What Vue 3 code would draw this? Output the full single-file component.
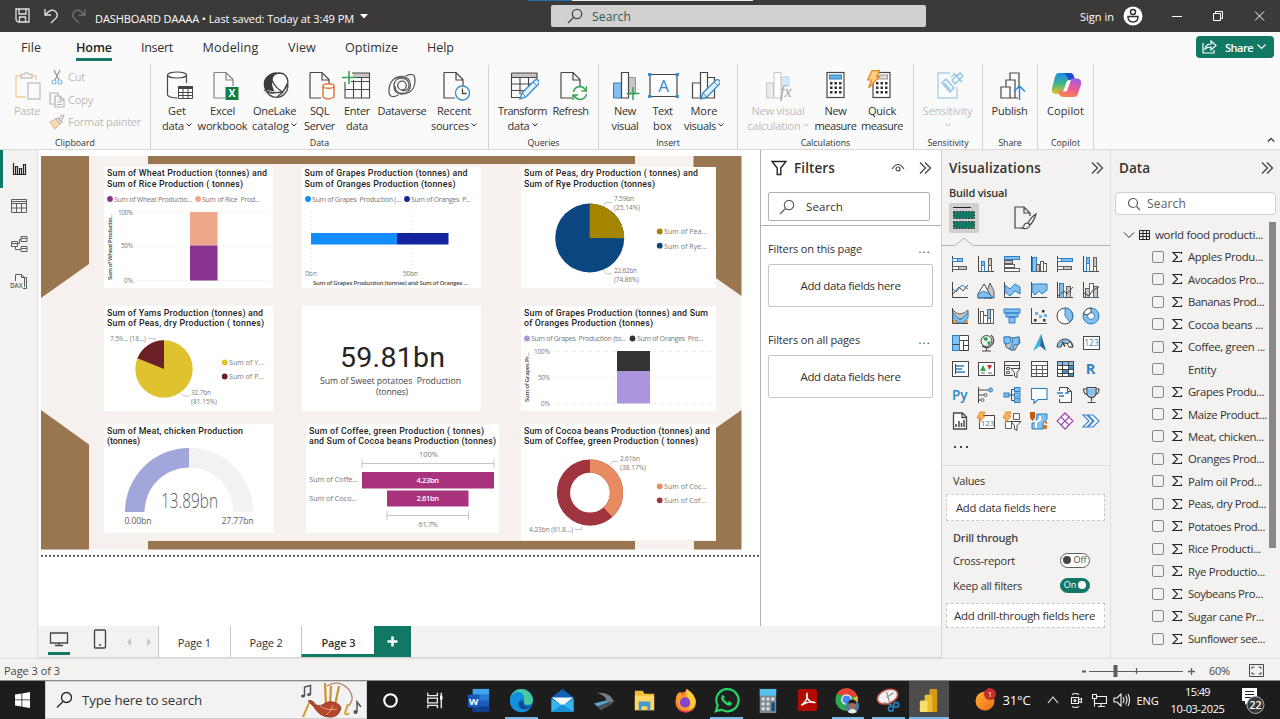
<script setup>
const vFit = {
  mounted(el, { value }) {
    const range = document.createRange()
    range.selectNodeContents(el)
    const width = range.getBoundingClientRect().width
    const count = el.textContent.length
    if (count) el.style.letterSpacing = (value - width) / count + 'px'
  },
}

const menus = [
  { t: 'File', w: 20, c: 62 }, { t: 'Home', w: 36, c: 64, on: true }, { t: 'Insert', w: 32, c: 62 },
  { t: 'Modeling', w: 56, c: 85 }, { t: 'View', w: 28, c: 58 }, { t: 'Optimize', w: 53, c: 81 }, { t: 'Help', w: 27, c: 57 },
]

const dk = '#484644'
const page = (x = 6) => `<path d="M${x} 2.5h12l7 7V16M${x} 2.5V28h11M${x + 12} 2.5V10h7" fill="none" stroke="${dk}" stroke-width="1.2"/>`
const pencil = '<path d="M13 29l2-6L28 10q2-1 3.500 .5t0 3.500L19 27z" fill="#e5f2fb" stroke="#3a8fd0" stroke-width="1.4"/><path d="M15 23l4 4M26 12l4 4" stroke="#3a8fd0"/>'
const calc = (x) => `<rect x="${x}" y="2.500" width="17" height="25" fill="#fff" stroke="${dk}" stroke-width="1.200"/>` +
  [0, 1, 2].map(r => [0, 1, 2].map(c => `<rect x="${x + 3 + c * 4.5}" y="${12 + r * 4.5}" width="2.500" height="2.500" fill="#333"/>`).join('')).join('')

const groups = [
  { name: 'Data', w: 338, p: 6, items: [
    { w: 40, a: 'Get', b: 'data', aw: 18, bw: 22, d: 1, i: `<ellipse cx="16" cy="5" rx="9.500" ry="3" fill="#fff" stroke="${dk}" stroke-width="1.200"/><path d="M6.500 5v20q2 3 10 3M25.500 5v8" fill="none" stroke="${dk}" stroke-width="1.200"/><path d="M17.500 16.500h14v12h-14z" fill="#fff" stroke="${dk}"/><path d="M17 16h15v3H17z" fill="${dk}"/><path d="M17 22.500h14M17 25.500h14M22 19v10M27 19v10" stroke="${dk}"/>` },
    { w: 51, a: 'Excel', b: 'workbook', aw: 25, bw: 50, i: `<path d="M7 2.500h12l7 7V16M7 2.500V28h11M19 2.500V10h7" fill="none" stroke="#858381" stroke-width="1.200"/><rect x="18.500" y="17" width="13" height="13" fill="#107c41"/><text x="25" y="27.200" text-anchor="middle" font-family="Open Sans, sans-serif" font-weight="700" font-size="10.500" fill="#fff">X</text>` },
    { w: 53, a: 'OneLake', b: 'catalog', aw: 43, bw: 37, d: 1, i: `<circle cx="17.500" cy="16" r="11.300" fill="#fff" stroke="${dk}" stroke-width="1.300"/><path d="M5 17Q3 9 11 4q7-4 12 1-9 1-10 9 1 6 4 9-9 3-12-6z" fill="#3b3a39"/><path d="M13 10q0-6 7-7 8 0 9 9l-5 10q-8-4-11-12zM5 20q8 4 18 2M18 27l6-5 5-8" fill="#fff" stroke="${dk}" stroke-width="1.300"/>` },
    { w: 37, a: 'SQL', b: 'Server', aw: 19, bw: 31, i: page() + '<path d="M19 16v11q5 4 11 0V16" fill="#fff" stroke="#e07b39" stroke-width="1.500"/><ellipse cx="24.500" cy="16" rx="5.500" ry="2.300" fill="#fff" stroke="#e07b39" stroke-width="1.500"/>' },
    { w: 38, a: 'Enter', b: 'data', aw: 26, bw: 22, i: `<path d="M4 28h25V3H12v8H4z" fill="#fff"/><path d="M12 3h17v4H12z" fill="#c8c6c4"/><path d="M11 3h17.500v25H4V12M4 19.500h24.500M10 11.500h18.500M12.500 10v18M20.500 7v21M12 7.500h16" fill="none" stroke="${dk}" stroke-width="1.100"/><path d="M8 1v13M1 7.500h14" stroke="#35a353" stroke-width="1.600"/>` },
    { w: 52, a: 'Dataverse', aw: 49, i: '<g fill="none" stroke="#595755" stroke-width="1.300"><path d="M19.500 6Q29 1.500 29 10c0 9-5 14-13 14-5 0-8-3-8-8s3-8 7.500-8S23 11 23 15.500 19 21 16 20.500"/><path d="M12.500 25Q3 29.500 3 21C3 12 8 6.500 16 6.500c5 0 8.500 3.500 8.500 8.500s-3.500 8.500-8 8.500-7.500-3-7.500-7.500"/><circle cx="16" cy="15.500" r="4.300"/></g>' },
    { w: 52, a: 'Recent', b: 'sources', aw: 34, bw: 38, d: 1, i: page() + '<circle cx="24.500" cy="23" r="7" fill="#fff" stroke="#3a8fd0" stroke-width="1.400"/><path d="M24.500 18.500V23.500h4" fill="none" stroke="#484644" stroke-width="1.300"/>' },
  ] },
  { name: 'Queries', w: 110, p: 8, items: [
    { w: 51, a: 'Transform', b: 'data', aw: 49, bw: 22, d: 1, i: `<path d="M5 3h25v4H5z" fill="#c8c6c4"/><path d="M4.500 3h25.500v12M4.500 3v24.500h9M5 7.500h25M5 14h23M5 20.500h13M13 7v17M21.500 7v12" fill="none" stroke="${dk}" stroke-width="1.100"/>` + pencil },
    { w: 45, a: 'Refresh', aw: 36, i: page() + '<g fill="none" stroke="#35a353" stroke-width="1.500"><path d="M18.500 22q1-5 6-5.500 4 0 6.500 4M31.500 24q-1 5-6 5.500-4 0-6.500-4"/><path d="M31.500 16v5h-5M18 30v-5h5"/></g>' },
  ] },
  { name: 'Insert', w: 139, p: 6, items: [
    { w: 40, a: 'New', b: 'visual', aw: 22, bw: 27, i: `<path d="M4.500 13h8v15h-8z" fill="#83c0f0" stroke="#2b7fc4"/><path d="M19.500 7.500h7V24h-7z" fill="#c8c6c4" stroke="#979593"/><path d="M12.500 2.500h7V28h-7z" fill="#fff" stroke="${dk}" stroke-width="1.200"/><path d="M24 17v13M17.500 23.500h13" stroke="#35a353" stroke-width="1.500"/>` },
    { w: 35, a: 'Text', b: 'box', aw: 20, bw: 19, i: `<path d="M3 4.500h27v22H3z" fill="#fff" stroke="${dk}" stroke-width="1.200"/><g fill="#3a8fd0"><path d="M1 3h3.500v3H1zM28.500 3H32v3h-3.500zM1 25h3.500v3H1zM28.500 25H32v3h-3.500z"/></g><text x="16.500" y="21.700" text-anchor="middle" font-family="Open Sans, sans-serif" font-size="17" fill="#2f8ad0">A</text>` },
    { w: 48, a: 'More', b: 'visuals', aw: 27, bw: 32, d: 1, i: `<path d="M4.500 13h8v15h-8zM12.500 2.500h7V28h-7zM19.500 7.500h7V28h-7z" fill="#fff" stroke="${dk}" stroke-width="1.200"/>` + pencil },
  ] },
  { name: 'Calculations', w: 176, p: 8, items: [
    { w: 64, a: 'New visual', b: 'calculation', aw: 53, bw: 53, d: 1, off: 1, i: `<path d="M4.500 13h7v15h-7z" fill="#edebe9" stroke="#c8c6c4"/><path d="M19 7h8v9h-8z" fill="#d5e8f6" stroke="#b5d6ee"/><path d="M12 2.500h7V28h-7z" fill="#fff" stroke="#c8c6c4"/><text x="18" y="27" font-family="Liberation Serif, serif" font-style="italic" font-size="16" fill="#a5a3a1">fx</text>` },
    { w: 51, a: 'New', b: 'measure', aw: 22, bw: 42, i: calc(7) + '<rect x="9.500" y="5" width="12" height="4" fill="#6ab1e8" stroke="#2b7fc4"/>' },
    { w: 42, a: 'Quick', b: 'measure', aw: 28, bw: 42, i: calc(7) + '<rect x="9.500" y="5" width="12" height="4" fill="#e1dfdd" stroke="#979593"/><path d="M6 .7h7.500l-3 6h3L2.500 18l3-8h-4z" fill="#fbd089" stroke="#e8871a" stroke-width="1.200"/>' },
  ] },
  { name: 'Sensitivity', w: 69, p: 8, items: [
    { w: 51, a: 'Sensitivity', b: '', aw: 50, d: 1, off: 1, i: '<path d="M18 3H6v25h19V17" fill="none" stroke="#a9d0ea" stroke-width="1.300"/><path d="M10 13l4-4 8 9-4 4zM12.500 13l6 7M19 7l4-3 2 2 3-3M20 10l8-7 3 3-8 8zM22 3l8 9" fill="none" stroke="#8fc2e5" stroke-width="1.300"/>' },
  ] },
  { name: 'Share', w: 55, p: 5, items: [
    { w: 43, a: 'Publish', aw: 36, i: `<path d="M7 17h9v11H7zM12 17v-7h9v18h-5M16 10V3h9v13M21 28h3" fill="none" stroke="${dk}" stroke-width="1.200"/><path d="M25.500 30V16M20 21.500l5.500-5.500 5.500 5.500" fill="none" stroke="#2b88d8" stroke-width="1.500"/>` },
  ] },
  { name: 'Copilot', w: 56, p: 5, items: [
    { w: 45, a: 'Copilot', aw: 37, i: '<defs><linearGradient id="cpA" x1="0" y1="0" x2="0" y2="1"><stop offset="0" stop-color="#1a8bea"/><stop offset=".5" stop-color="#3bb58a"/><stop offset="1" stop-color="#e8c51e"/></linearGradient><linearGradient id="cpB" x1=".6" y1="0" x2=".3" y2="1"><stop offset="0" stop-color="#a35be8"/><stop offset=".5" stop-color="#ee5a97"/><stop offset="1" stop-color="#f58a4c"/></linearGradient></defs><path d="M9 3h11q3 0 4 4l1 3h-5q-3 0-4 4l-2 7q-1 3-4 3H6q-5 0-4-6L5 7q1-4 4-4z" fill="url(#cpA)"/><path d="M14 3h6q3 0 4 4l1 3h-5q-2 0-3-3t-3-4z" fill="#1b4fd0"/><path d="M24 27H13q-3 0-4-3l-1-3 5-.5q3 0 4-4l2-5q1-3 4-3h4q5 0 4 6l-3 9q-1 3.500-4 3.500z" fill="url(#cpB)"/><path d="M17 11l4-1-4 11-4 1z" fill="#fff"/>' },
  ] },
]

const b = '#2b7fc4', f = '#83c0f0', g = '#605e5c', lg = '#c8c6c4'
const ax = `<path d="M1.500 1v15.500H17" fill="none" stroke="${dk}"/>`
const ay = `<path d="M1.500 1v16" stroke="${dk}"/>`
const frame = `<rect x="1.500" y="2.500" width="16" height="13" fill="#fff" stroke="${dk}"/>`
const bolt = '<path d="M3 0h5L6 4h2L2 11l1-5H0z" fill="#fbb65a" stroke="#e07b1a" stroke-width=".8"/>'
const bar = (x, y, w, h, c, s) => `<rect x="${x}" y="${y}" width="${w}" height="${h}" fill="${c}" stroke="${s}"/>`
const vizIcons = [
  ay + bar(1.5, 3.5, 5, 3, '#fff', b) + bar(6.5, 3.5, 5, 3, f, b) + bar(1.5, 11.5, 6, 3, '#fff', g) + bar(7.5, 11.5, 8, 3, lg, g),
  ax + bar(4.5, 6.5, 3, 4, f, b) + bar(4.5, 10.500, 3, 6, '#fff', b) + bar(11.5, 3.5, 3, 7, lg, g) + bar(11.5, 10.5, 3, 6, '#fff', g),
  ay + bar(1.5, 1.500, 15, 3, f, b) + bar(1.5, 5.5, 8, 3, lg, g) + bar(1.5, 9.5, 10, 3, '#fff', g) + bar(1.5, 13.5, 15, 3, '#fff', g),
  ax + bar(2.5, 2.5, 4, 14, f, b) + bar(6.5, 9.5, 3, 7, lg, g) + bar(10.5, 6.5, 3, 10, '#fff', g) + bar(13.5, 8.5, 3, 8, '#fff', g),
  ay + bar(1.5, 3.5, 4, 3, '#fff', b) + bar(5.5, 3.5, 11, 3, f, b) + bar(1.5, 11.5, 6, 3, '#fff', g) + bar(7.5, 11.5, 8, 3, lg, g),
  ax + bar(4.5, 2.5, 3, 6, f, b) + bar(4.5, 8.5, 3, 8, '#fff', b) + bar(11.5, 2.5, 3, 9, lg, g) + bar(11.5, 11.5, 3, 5, '#fff', g),
  ax + `<path d="M2 13L8 6l4 4 5-6" fill="none" stroke="${dk}"/><path d="M2 8l3 3 6-7 6 4" fill="none" stroke="${b}"/>`,
  `<path d="M7 17L13 2l4 8v7z" fill="${lg}" stroke="${g}"/><path d="M1 13L7 3l8 14H1z" fill="#fff" stroke="${dk}"/><path d="M1 16.500v-3l5-3.500 5 2 5 4.500z" fill="${f}" stroke="${b}"/>`,
  ax + `<path d="M2 4l5 4 5-5 5 3v7l-5-3-5 5-5-4z" fill="${f}" stroke="${b}"/>`,
  ax + `<path d="M2 3h15v6l-5 4-3-3-4 4-3-4z" fill="${f}" stroke="${b}"/>`,
  ax + bar(3.5, 2.5, 4, 14, f, b) + bar(10.5, 5.5, 4, 11, lg, g) + `<path d="M2 15l6-5 3 3 6-7" fill="none" stroke="${dk}"/>`,
  ax + bar(3.5, 7.5, 4, 9, lg, g) + bar(7.500, 2.500, 4, 14, '#fff', b) + bar(11.5, 5.5, 4, 11, lg, g) + `<path d="M2 12l5 3 4-6 6-3" fill="none" stroke="${dk}"/>`,
  ax + `<path d="M2 13h4l3 3H2zM12 13h5v3h-5z" fill="#ec9b43"/><path d="M2 3q3 4 7 4t8-4v4q-4 5-8 5T2 7z" fill="${lg}" stroke="${g}"/><path d="M2 6l7 7 8-7v5l-5 5H8l-6-5z" fill="${f}" stroke="${b}"/>`,
  ax + bar(3.5, 4.5, 3, 12, '#fff', g) + bar(6.5, 8.5, 4, 8, '#fff', g) + bar(10.5, 2.5, 3, 9, f, b) + bar(13.5, 2.5, 3, 14, '#fff', g),
  `<path d="M1 2h16v4H1zM3 6h12v4H3zM6 10h6v6H6z" fill="${f}" stroke="${b}"/>`,
  ax + `<path d="M5 5h3v3H5zM9 8h3v3H9zM14 7h3v3h-3z" fill="#6db4ea"/><path d="M12 3h2.500v2.500H12zM4 12h2.500v2.500H4zM13 12h2.500v2.500H13z" fill="#333"/>`,
  `<circle cx="9" cy="9" r="8" fill="#fff" stroke="${dk}"/><path d="M9 1a8 8 0 0 1 5 14L9 9z" fill="${f}" stroke="${b}"/>`,
  `<circle cx="9" cy="9" r="5.700" fill="none" stroke="${f}" stroke-width="4.600"/><circle cx="9" cy="9" r="8" fill="none" stroke="${b}"/><circle cx="9" cy="9" r="3.500" fill="#fff" stroke="${b}"/><path d="M9 1a8 8 0 0 0-7.500 6l4 .7L9 5.500z" fill="#fff" stroke="${dk}"/>`,
  `<path d="M1.500 1.500h16v15h-16z" fill="#fff" stroke="${dk}"/><path d="M1.500 1.500h7v15h-7z" fill="${f}" stroke="${b}"/><path d="M1.500 10.500h7M8.500 6.500H17M12.500 6.500v10M12 11.500h5" stroke="${dk}"/>`,
  `<circle cx="9.500" cy="7" r="5.500" fill="#e7f4ea" stroke="${dk}"/><path d="M6 4l4-1 1 3-3 1zM10 8l4-1-2 5z" fill="#2c9a55"/><path d="M14 1q5 5 1 10-4 5-10 1M9.500 14v3M5 17h9" fill="none" stroke="${dk}" stroke-width="1.100"/>`,
  `<path d="M1 3h6l2 1 7-1 1 6-3 3-2 4H8l-5-3z" fill="${lg}" stroke="${g}"/><path d="M1 3h6l1 5-3 2-4-1zM10 4l6-1v7l-5 1-1 5-4-1 3-4z" fill="${f}" stroke="${b}"/>`,
  '<path d="M11 0L3 17l7-5z" fill="#3db5d9"/><path d="M11 0l5 17-6-5z" fill="#1e6f9f"/>',
  `<path d="M1 13a8 8 0 0 1 16 0h-4a4 4 0 0 0-8 0z" fill="${f}" stroke="${dk}"/><path d="M14 7l3 6h-4a4 4 0 0 0-1.500-2.500z" fill="#fff" stroke="${dk}"/><path d="M9 12.500L6 7.500" stroke="${dk}" stroke-width="1.500"/>`,
  frame + `<text x="9.500" y="12.200" text-anchor="middle" font-size="8.500" font-family="Open Sans, sans-serif" fill="${b}">123</text>`,
  bar(1.5, 1.5, 16, 15, '#fff', dk) + `<path d="M4.500 4v10" stroke="${dk}"/><path d="M5 6h8M5 9h6M5 12h9" stroke="${b}" stroke-width="1.700"/>`,
  frame + '<path d="M3 11l3-6 3 6z" fill="#35a353"/><path d="M10 5h5l-2.500 5z" fill="#d13438"/><path d="M4 13h4M11 13h4" stroke="#605e5c"/>',
  `<path d="M10 15.500H1.500v-14h15V8M1 5.500h16" fill="none" stroke="${dk}"/><path d="M3.500 7.500h3v2h-3zM3.500 11.500h3v2h-3z" fill="none" stroke="${g}"/><path d="M8 8.500h9l-3 4v5l-2.500-1.500v-3.500z" fill="#fff" stroke="${dk}"/>`,
  bar(1.5, 1.5, 16, 15, '#fff', dk) + `<path d="M1 5.500h16M1 9.500h16M1 13.500h16M6.500 5v12M12.500 5v12" stroke="${g}"/>`,
  bar(1.5, 1.500, 16, 15, '#fff', dk) + `<path d="M6 9h6v4H6zM12 5h5v4h-5zM12 13h5v3h-5z" fill="#3a8fd0"/><path d="M2 2h15v3H2z" fill="${f}"/><path d="M1 5.500h16M1 9.500h16M1 13.500h16M6.500 2v15M12.500 2v15" stroke="${dk}"/>`,
  `<text x="8.500" y="14" text-anchor="middle" font-size="14.500" font-weight="700" font-family="Open Sans, sans-serif" fill="#2e86c4">R</text>`,
  `<text x="1" y="13.500" font-size="13.500" font-weight="600" font-family="Open Sans, sans-serif" fill="#2e86c4">Py</text>`,
  `<path d="M1.500 1v16M1.500 4h10M1.500 9h6M1.500 14h3" stroke="${dk}"/><circle cx="13.500" cy="4" r="2" fill="${f}" stroke="${b}"/><circle cx="8.500" cy="9" r="1.500" fill="#fff" stroke="${g}"/><circle cx="5.500" cy="14" r="1.500" fill="#fff" stroke="${g}"/>`,
  `<path d="M6 9h5M8.500 3.500v11M8.500 3.500H11M8.500 14.500H11" fill="none" stroke="${dk}"/>` + bar(1, 7, 5, 4, f, b) + bar(11.5, 1.500, 5.500, 4, f, b) + bar(11.5, 7, 5.500, 4, f, b) + bar(11.5, 12.5, 5.500, 4, f, b),
  `<path d="M1.500 2.500h15.500v11H8l-4 4v-4H1.500z" fill="#fff" stroke="${b}" stroke-width="1.100"/>`,
  `<path d="M3.500 5V1.500h8l4 4v11h-12V13M11.500 1.500v4h4" fill="#fff" stroke="${dk}"/><path d="M1 7h6M9 7h4M3 10h5" stroke="${b}" stroke-width="1.600"/>`,
  `<path d="M5 1.500h9v6q-1 4-4.500 4T5 7.500zM5 3H1.500q0 5 4 5.500M14 3h3q0 5-4 5.500M9.500 11.500v4M5.500 16.500h8" fill="none" stroke="${dk}" stroke-width="1.200"/><path d="M6 2.500h7V8l-3.500 3L6 8z" fill="${f}"/>`,
  `<path d="M2.500 1h9l4 4v12h-13zM11 1v4.500h4.500" fill="#fff" stroke="${dk}" stroke-width="1.300"/><path d="M5 12v3M8 9v6M10.500 11v4M13 8v7" stroke="${dk}" stroke-width="1.500"/>`,
  `<rect x="2.500" y="3.500" width="15" height="13" fill="#fff" stroke="${dk}"/><text x="10.500" y="13.500" text-anchor="middle" font-size="8" font-family="Open Sans, sans-serif" fill="${b}">123</text>` + bolt,
  `<path d="M10.500 1.500h6v6h-6zM2.500 9.500h6v7h-6z" fill="#fff" stroke="${g}"/><path d="M8 9.500h10l-4 4v5l-2.500-1.500v-3.500z" fill="#fff" stroke="${dk}"/>` + bolt,
  `<path d="M7 2h10v5l-4 4v6H2v-6h4z" fill="${f}" stroke="${b}"/><path d="M10 4v4l-4 2v6" stroke="#fff" stroke-width="2" fill="none"/><path d="M0 0h5v6l-2.500 3L0 6z" fill="#c55a11"/><circle cx="15" cy="15" r="2.200" fill="#d4731c"/><circle cx="16" cy="10.500" r="1.300" fill="#d4731c"/>`,
  '<g fill="#fff" stroke="#a04fae" stroke-width="1.200"><path d="M9 1l8 8-8 8-8-8z"/><path d="M5 5l8 8M13 5l-8 8M9 1L5 5l4 4 4-4zM9 17l4-4-4-4-4 4z"/></g>',
  '<g fill="#fff" stroke="#3a86d0" stroke-width="1.200"><path d="M1 3h4l6 6-6 6H1l6-6z"/><path d="M6 3h5l6 6-6 6H6l6-6z"/></g>',
]

const fields = [
  ['Apples Produ...', 75], ['Avocados Pro...', 76], ['Bananas Prod...', 76], ['Cocoa beans ...', 75], ['Coffee, green ...', 77], ['Entity', 28],
  ['Grapes Produ...', 76], ['Maize Product...', 79], ['Meat, chicken...', 76], ['Oranges Prod...', 76], ['Palm oil Prod...', 74], ['Peas, dry Prod...', 78],
  ['Potatoes Prod...', 77], ['Rice Producti...', 73], ['Rye Productio...', 77], ['Soybeans Pro...', 75], ['Sugar cane Pr...', 76], ['Sunflower see...', 77],
]

const cards = [
  [104, 167, 169, 121], [302, 167, 179, 121], [521, 167, 195, 121],
  [104, 306, 169.500, 105], [302, 306, 179, 105], [521, 306, 195, 105],
  [104, 424, 169.500, 109], [306, 424, 193, 109], [521, 424, 195, 116],
]
const titles = [
  [107, 176, 'Sum of Wheat Production (tonnes) and', 160], [107, 186.500, 'Sum of Rice Production ( tonnes)', 136],
  [304.500, 176, 'Sum of Grapes Production (tonnes) and', 163], [304.500, 186.500, 'Sum of Oranges Production (tonnes)', 151],
  [524, 176, 'Sum of Peas, dry Production ( tonnes) and', 174], [524, 186.500, 'Sum of Rye Production (tonnes)', 131],
  [107, 315.500, 'Sum of Yams Production (tonnes) and', 156], [107, 326, 'Sum of Peas, dry Production ( tonnes)', 157],
  [524, 315.500, 'Sum of Grapes Production (tonnes) and Sum', 184], [524, 326, 'of Oranges Production (tonnes)', 129],
  [107, 433.500, 'Sum of Meat, chicken Production', 136], [107, 443.500, '(tonnes)', 33],
  [309, 433.500, 'Sum of Coffee, green Production ( tonnes)', 175], [309, 443.500, 'and Sum of Cocoa beans Production (tonnes)', 187],
  [524, 433.500, 'Sum of Cocoa beans Production (tonnes) and', 186], [524, 443.500, 'Sum of Coffee, green Production ( tonnes)', 174],
]
const labels = [
  [114, 201.500, 'Sum of Wheat Productio...', 78], [202, 201.500, 'Sum of Rice  Prod...', 58],
  [118, 214.500, '100%', 15, 6.5], [121, 248, '50%', 12, 6.5], [124, 282.500, '0%', 9, 6.5],
  [312, 201.500, 'Sum of Grapes  Production (...', 89], [411, 201.500, 'Sum of Oranges  P...', 60],
  [305, 275.500, '0bn', 12, 6.5], [403, 275.500, '50bn', 15, 6.5],
  [614, 200.500, '7.59bn', 20, 6.5], [614, 209.800, '(25.14%)', 26, 6.5], [614, 272.500, '22.62bn', 23, 6.5], [614, 281.800, '(74.86%)', 25, 6.5],
  [664, 234, 'Sum of Pea...', 43], [664, 248.500, 'Sum of Rye...', 43],
  [110, 341, '7.59... (18...)', 36, 6.5], [191, 394.500, '32.7bn', 20, 6.5], [191, 403.800, '(81.15%)', 26, 6.5],
  [229, 365, 'Sum of Y...', 35], [229, 379, 'Sum of P...', 35],
  [531, 341, 'Sum of Grapes  Production (to...', 95], [637, 341, 'Sum of Oranges  Pro...', 66],
  [534, 353.800, '100%', 16, 6.5], [538, 379.500, '50%', 12, 6.5], [541, 405.500, '0%', 9, 6.5],
  [124.500, 524.300, '0.00bn', 27, 8.7, '#605e5c'], [221.500, 524.300, '27.77bn', 32, 8.7, '#605e5c'],
  [419, 456.800, '100%', 19, 7.500], [418.500, 527, '61.7%', 19.500, 7.500],
  [309, 482, 'Sum of Coffe...', 49, 7.500], [309, 501, 'Sum of Coco...', 48, 7.500],
  [620, 460.800, '2.61bn', 20, 6.5], [620, 470, '(38.17%)', 26, 6.5], [529, 532, '4.23bn (61.8...)', 44, 6.5],
  [664, 489, 'Sum of Coc...', 43], [664, 503, 'Sum of Cof...', 42],
]
const dots = [
  [110, 199, '#883390'], [198, 199, '#efa789'], [308, 199, '#118dff'], [407, 199, '#12239e'],
  [659.700, 231.500, '#a48500'], [659.700, 245.700, '#0c4680'], [224.700, 362.500, '#e0c12f'], [224.700, 376.500, '#6b2028'],
  [527, 338.500, '#ab95dc'], [632.500, 338.500, '#333'], [659.700, 486.300, '#e98b60'], [659.700, 500.300, '#a0343e'],
]

const tasks = [
  { w: 46, i: '<circle cx="14" cy="14" r="6.500" fill="none" stroke="#fff" stroke-width="2.200"/>' },
  { w: 43.5, i: '<g fill="none" stroke="#eee" stroke-width="1.400"><path d="M7 6v3h10V6M7 22v-3h10v3M7 11.500h10v5H7z"/><path d="M21 6v16"/></g><path d="M19.700 9h2.600v4h-2.600z" fill="#fff"/>' },
  { w: 44.5, i: '<path d="M8 2h17v24H8z" fill="#1b5cbe"/><path d="M8 2h17v6H8z" fill="#41a5ee"/><path d="M8 8h17v6H8z" fill="#2b7cd3"/><path d="M8 20h17v6H8z" fill="#103f91"/><path d="M3 8h12v13H3z" fill="#185abd"/><text x="9" y="18.500" text-anchor="middle" font-size="10" font-weight="700" font-family="Open Sans, sans-serif" fill="#fff">W</text>' },
  { w: 41, u: 1, i: '<circle cx="14" cy="14" r="12" fill="#0f78c8"/><path d="M2.500 11C5-1 22-1 25.500 11c2 9-8 9-9 5 1-5-2-7-5-7-5 0-8 3-9 6z" fill="#48c9a0"/><path d="M2.500 12C6 2 17 4 17 12c-4-1-7 2-6 7 1 5 8 6 12 3-5 7-19 5-21-6z" fill="#1290df"/><path d="M11 18c0-3 2-5 5-3-1 6 5 6 8 4-3 6-13 5-13-1z" fill="#0c4a92"/>' },
  { w: 41, i: '<path d="M2.500 11L14 2l11.500 9v15h-23z" fill="#0e62b5"/><path d="M3 11h22l-11 9z" fill="#f4fbff"/><path d="M2.500 12l11.500 8 11.500-8v14h-23z" fill="#35b7ee"/><path d="M2.500 26L14 18l11.500 8z" fill="#198fd6"/>' },
  { w: 41, i: '<path d="M7 6q12-1 16 6l2 3-9 3q4-8-9-12z" fill="#777c80"/><path d="M4 17l13-3 7 3-13 7z" fill="#4a5257"/><path d="M4 17l13-3 3 1-12 5z" fill="#57a8cd"/>' },
  { w: 41, i: '<path d="M4 4h8l2 3h10v17H4z" fill="#f4bd36"/><path d="M4 9h20v15H4z" fill="#ffd667"/><path d="M8 15h12v9h-3v-4h-6v4H8z" fill="#3f9ad6"/>' },
  { w: 41, i: '<circle cx="14" cy="15.500" r="10.500" fill="#ff6a2f"/><path d="M4 14q0-8 5-9 0 4 3 4l3-7q4 2 4 5 6 3 6 9-1 10-11 10T4 14z" fill="#ff9a2e"/><path d="M15 2q9 5 9 13 0 8-8 10 6-6 2-12-4-4-3-11z" fill="#ffcf3c"/><circle cx="13.500" cy="16" r="5.300" fill="#8147c8"/><path d="M4 13q1 11 10 12 6 0 9-5-4 9-12 6-7-3-7-13z" fill="#ed3653"/>' },
  { w: 41, u: 1, i: '<path d="M3 25l1.800-6A11.500 11.500 0 1 1 9 23.500z" fill="#1f2220" stroke="#27d366" stroke-width="2.300"/><path d="M10 8q-4 4 2 9t8 0l-3-2.500-2 1.500q-3-1-4-4l1.500-1.500z" fill="#27d366"/>' },
  { w: 40.4, i: '<path d="M6 2h17v25H6z" fill="#7e8990"/><path d="M6 2h17v7H6z" fill="#54c3ef"/><path d="M8 11h3v3H8zM13 11h3v3h-3zM18 11h3v3h-3zM8 16h3v3H8zM13 16h3v3h-3zM8 21h3v3H8zM13 21h3v3h-3z" fill="#dfe4e7"/><path d="M18 16h3.500v9H18z" fill="#12508c"/>' },
  { w: 40.4, i: '<rect x="4" y="2" width="20" height="23" rx="3" fill="#b30b00"/><path d="M7.500 19c5-3 7-8 6-12-2 3 3 10 7.500 9-4-2-10 1-13.500 3z" fill="none" stroke="#fff" stroke-width="1.500"/>' },
  { w: 40.4, u: 1, i: '<circle cx="13" cy="13" r="11.500" fill="#2da94f"/><path d="M3 7a11.500 11.500 0 0 1 20 0l1 3H13z" fill="#e94235"/><path d="M24 9a11.500 11.500 0 0 1-11 15.500L18 14z" fill="#fbc016"/><circle cx="13" cy="13" r="5.500" fill="#fff"/><circle cx="13" cy="13" r="4.300" fill="#4285f4"/><circle cx="19" cy="20" r="7" fill="#4879a5"/><path d="M14 26q5-7 10 0-5 3-10 0z" fill="#e9e7e6"/><circle cx="19" cy="19" r="3.800" fill="#a46a4d"/><path d="M15 18q0-5 4-5t4 5q-4-3-8 0z" fill="#201a18"/>' },
  { w: 40.4, u: 1, i: '<ellipse cx="13" cy="10" rx="11" ry="7" transform="rotate(-22 13 10)" fill="#f4f1f1" stroke="#cc544e" stroke-width="1.500"/><path d="M12 5l4 14M19 6l-7 5M9 16l9 3" stroke="#8a8785" stroke-width="1.100"/><circle cx="16.500" cy="22.500" r="2.500" fill="none" stroke="#2682bc" stroke-width="1.700"/><circle cx="22" cy="18.500" r="2.500" fill="none" stroke="#2682bc" stroke-width="1.700"/>' },
  { w: 40, u: 1, act: 1, i: '<rect x="15" y="2" width="8" height="24" rx="1.500" fill="#d59a12"/><rect x="10" y="8" width="8" height="18" rx="1.500" fill="#edbd2f"/><rect x="5" y="14" width="8" height="12" rx="1.500" fill="#f8df6b"/>' },
]
</script>

<template>
  <div class="app">
    <header class="titlebar">
      <div class="quick">
        <svg width="80" height="20" viewBox="0 0 80 20" fill="none" stroke="#e4e2e0" stroke-width="1.3"><path d="M2 3h13v13H4l-2-2zM5 3v5h7V3M5.500 16v-5h6v5" /><path d="M31 3v6h6M31 9q7-8 11-3 3 4-1 7l-4 4" /><path d="M70 3v6h-6M70 9q-7-8-11-3-3 4 1 7l4 4" stroke="#757371" transform="translate(1)" /></svg>
        <span v-fit="259" class="doc">DASHBOARD DAAAA • Last saved: Today at 3:49 PM</span>
        <svg width="8" height="5" viewBox="0 0 8 5"><path d="M0 0h8L4 4.500z" fill="#fff" /></svg>
      </div>
      <div class="topsearch">
        <svg width="16" height="16" viewBox="0 0 16 16" fill="none" stroke="#484644" stroke-width="1.3"><circle cx="10" cy="6" r="4.700" /><path d="M6.500 9.500L1 15" /></svg>
        <span v-fit="39">Search</span>
      </div>
      <div class="sign">
        <span v-fit="34">Sign in</span>
        <svg width="20" height="20" viewBox="0 0 20 20"><circle cx="10" cy="10" r="9.500" fill="#fff" /><circle cx="10" cy="6" r="2.500" fill="none" stroke="#333" stroke-width="1.500" /><path d="M5 10.500h10q0 5.500-5 5.500t-5-5.500z" fill="none" stroke="#333" stroke-width="1.500" /></svg>
      </div>
      <div class="winbtns">
        <svg width="98" height="16" viewBox="0 0 98 16" fill="none" stroke="#fff"><path d="M2 8.500h10M43.500 5.500h7v7h-7zM45.500 5V3.500h7V10.500H51M85 3.500l9 9M94 3.500l-9 9" /></svg>
      </div>
      <i class="peek"></i>
    </header>

    <nav class="menu">
      <a v-for="m in menus" :key="m.t" :class="{ on: m.on }" :style="{ width: m.c + 'px' }"><span v-fit="m.w">{{ m.t }}</span></a>
      <button class="share">
        <svg width="16" height="14" viewBox="0 0 16 14" fill="none" stroke="#fff" stroke-width="1.200"><path d="M1 3v10h11v-3M3 9q1-5 6-5V1l5 4.500L9 10V7Q5 7 3 9z" /></svg>
        <span v-fit="28">Share</span>
        <svg width="9" height="6" viewBox="0 0 9 6" fill="none" stroke="#fff" stroke-width="1.200"><path d="M.5.500l4 4 4-4" /></svg>
      </button>
    </nav>

    <section class="ribbon">
      <div class="group clip">
        <div class="clipbody">
          <div class="paste">
            <svg width="28" height="32" viewBox="0 0 28 32" fill="none" stroke-width="1.500"><path d="M13 27H3V6h4M20 6h3v4" stroke="#f5cf9c" /><path d="M8 8V4.500h3q2-4 5 0h3V8z" stroke="#c8c6c4" /><path d="M15 13h12v16H15z" stroke="#c8c6c4" fill="#fafafa" /></svg>
            <span v-fit="26">Paste</span>
          </div>
          <div class="cliplist">
            <div><svg width="16" height="16" viewBox="0 0 16 16" fill="none" stroke-width="1.200"><path d="M5 1l5 10M11 1L6 11" stroke="#979593" /><circle cx="5" cy="13" r="2" stroke="#83bce6" /><circle cx="11" cy="13" r="2" stroke="#83bce6" /></svg><span v-fit="17">Cut</span></div>
            <div><svg width="16" height="16" viewBox="0 0 16 16" fill="#fafafa" stroke="#b5b3b1" stroke-width="1.200"><path d="M6 12H1V1h8v3" /><path d="M6 4h5l4 4v7H6zM11 4v4h4M8 10h5M8 12.500h5" /></svg><span v-fit="25">Copy</span></div>
            <div><svg width="16" height="16" viewBox="0 0 16 16" stroke-width="1.100"><path d="M1 8l6-3 4 4-5 6z" fill="#fbdcb0" stroke="#e9b98a" /><path d="M7 5l2-1 4 4-2 2zM10 5l3-4 2 1-3 5" fill="#f1f0ef" stroke="#b5b3b1" /></svg><span v-fit="73">Format painter</span></div>
          </div>
        </div>
        <small v-fit="40">Clipboard</small>
      </div>
      <div v-for="gr in groups" :key="gr.name" class="group" :style="{ width: gr.w + 'px', paddingLeft: gr.p + 'px', paddingRight: gr.p + 'px' }">
        <div class="items">
          <div v-for="it in gr.items" :key="it.a + it.b" class="item" :class="{ off: it.off }" :style="{ width: it.w + 'px' }">
            <svg width="32" height="32" viewBox="0 0 32 32" v-html="it.i"></svg>
            <div class="ln"><span v-fit="it.aw">{{ it.a }}</span></div>
            <div class="ln"><span v-if="it.b" v-fit="it.bw">{{ it.b }}</span><svg v-if="it.d" class="dd" width="6" height="4" viewBox="0 0 6 4" fill="none" stroke="currentColor"><path d="M.5.500L3 3 5.500.500" /></svg></div>
          </div>
        </div>
        <small>{{ gr.name }}</small>
      </div>
      <svg class="collapse" width="10" height="6" viewBox="0 0 10 6" fill="none" stroke="#484644" stroke-width="1.800"><path d="M1 5l4-4 4 4" /></svg>
    </section>

    <main class="main">
      <div class="left">
        <aside class="rail">
          <div class="cur"><svg width="18" height="18" viewBox="0 0 18 18" fill="none" stroke="#252423" stroke-width="1.200"><path d="M3.500 3v11.500H16M5.500 6.500h2v8h-2zM9.500 8.500h2v6h-2zM13.500 4.500h2v10h-2z" /></svg></div>
          <div><svg width="18" height="18" viewBox="0 0 18 18" fill="none" stroke="#605e5c"><path d="M1.500 2.500h15v13h-15zM1.500 6.500h15M1.500 11h15M6.500 6v10M11.500 6v10M2 4.500h15" /></svg></div>
          <div><svg width="18" height="18" viewBox="0 0 18 18" fill="none" stroke="#605e5c"><path d="M1.500 6.500h6v5h-6zM1.500 8.500h6M11 1.500h6v5h-6zM11 3.500h6M11 11.500h6v5h-6zM11 13.500h6M7.500 8.500h2V4.500H11M5.500 11.500v3H11" /></svg></div>
          <div><svg width="18" height="18" viewBox="0 0 18 18" fill="none" stroke="#605e5c"><path d="M5.500 9V2.500h6l3 3V15M11.500 2.500v3h3M14.500 5.500h2v11H13" /><text x="0" y="16" font-size="6.200" font-weight="600" font-family="Open Sans, sans-serif" fill="#605e5c" stroke="none">DAX</text></svg></div>
        </aside>
        <div class="work">
          <svg class="report" width="722" height="476" viewBox="38 150 722 476">
            <rect x="41" y="156" width="700" height="393.500" fill="#f6f1ee" />
            <path fill="#997650" d="M41 156h48v108l-48 34zM148 156h487v8H148zM693.500 156H741.500v140L716 278V167h-22.500zM41 410l48 34.500v105H41zM148 541h487v8.500H148zM741.500 410v139.500H694V541h22V428z" />
            <rect v-for="(c, n) in cards" :key="'c' + n" :x="c[0]" :y="c[1]" :width="c[2]" :height="c[3]" fill="#fff" />
            <path d="M41 555.800H760" stroke="#4d4b49" stroke-width="1.800" stroke-dasharray="2 2" />
            <g stroke="#dedcda" stroke-dasharray="1 3"><path d="M138 212H270M138 246H270M138 280.500H270M311 212v58M411 212v58M555 351.500H712M555 377.500H712M555 403.500H712" /></g>
            <g class="bars">
              <rect x="190" y="212" width="27.500" height="33.500" fill="#efa789" /><rect x="190" y="245.500" width="27.500" height="35" fill="#883390" />
              <rect x="311" y="233" width="86" height="11.500" fill="#118dff" /><rect x="397" y="233" width="51.500" height="11.500" fill="#12239e" />
              <rect x="617" y="351" width="33" height="20" fill="#333" /><rect x="617" y="371" width="33" height="32.500" fill="#ab95dc" />
              <rect x="362" y="472" width="132" height="16.500" fill="#a8327c" /><rect x="387" y="490.500" width="81.500" height="16" fill="#a8327c" />
            </g>
            <circle cx="589.700" cy="238" r="34.500" fill="#0c4680" /><path d="M589.700 238V203.500A34.500 34.500 0 0 1 624.200 238.300z" fill="#a48500" />
            <circle cx="164" cy="369" r="28.700" fill="#e0c12f" /><path d="M164 369L137.400 358.200A28.700 28.700 0 0 1 164 340.300z" fill="#6b2028" />
            <circle cx="590" cy="492.700" r="26.500" fill="none" stroke="#a0343e" stroke-width="13.200" /><path d="M590 459.600A33.100 33.100 0 0 1 612.400 517L603.500 507.400A19.900 19.900 0 0 0 590 472.800z" fill="#e98b60" />
            <path d="M125 512a64 64 0 0 1 64-64v19.500A44.500 44.500 0 0 0 144.500 512z" fill="#a2a6da" /><path d="M189 448a64 64 0 0 1 64 64h-19.500A44.500 44.500 0 0 0 189 467.500z" fill="#f3f2f1" />
            <g fill="none" stroke="#c8c6c4"><path d="M604 206l1-3.500h7M604 270l2 4h6M148 338.500h7v3M181 394l3 2h6M610 465l2-3.500h6M575 529.500h7v-4M362 463.500h132M362 459v9M494 459v9M387 515.500h81.500M387 511v9M468.500 511v9" /></g>
            <circle v-for="(d, n) in dots" :key="'d' + n" :cx="d[0]" :cy="d[1]" r="2.900" :fill="d[2]" />
            <g class="din"><text v-for="(t, n) in titles" :key="'t' + n" :x="t[0]" :y="t[1]" :textLength="t[3]">{{ t[2] }}</text></g>
            <g class="lbl"><text v-for="(t, n) in labels" :key="'l' + n" :x="t[0]" :y="t[1]" :textLength="t[3]" :font-size="t[4] || 7" :fill="t[5] || '#7a7876'">{{ t[2] }}</text></g>
            <g class="axis">
              <text transform="translate(112 280) rotate(-90)" textLength="66">Sum of Wheat Productio...</text>
              <text transform="translate(529 402) rotate(-90)" textLength="50">Sum of Grapes Pr...</text>
              <text x="313" y="285" textLength="155">Sum of Grapes Production (tonnes) and Sum of Oranges ...</text>
            </g>
            <text class="big" x="340" y="367.300" textLength="105">59.81bn</text>
            <text class="sub" x="320" y="384" textLength="141">Sum of Sweet potatoes&#160; Production</text>
            <text class="sub" x="376" y="395" textLength="32">(tonnes)</text>
            <text class="gauge" x="161" y="508" textLength="57" lengthAdjust="spacingAndGlyphs">13.89bn</text>
            <g class="inbar"><text x="416.500" y="483.200" textLength="22.500">4.23bn</text><text x="416.500" y="501.300" textLength="22.500">2.61bn</text></g>
          </svg>

          <aside class="filters">
            <div class="fhead">
              <svg width="16" height="16" viewBox="0 0 16 16" fill="none" stroke="#252423" stroke-width="1.400"><path d="M1 1.500h14L9.800 8v6.500H6.200V8z" /></svg>
              <b v-fit="41">Filters</b>
              <svg class="eye" width="14" height="10" viewBox="0 0 14 10" fill="none" stroke="#484644" stroke-width="1.200"><path d="M1 6q6-9 12 0" /><circle cx="7" cy="6" r="2" /></svg>
              <svg width="13" height="12" viewBox="0 0 13 12" fill="none" stroke="#484644" stroke-width="1.300"><path d="M1 .5L6.500 6 1 11.500M6 .5L11.500 6 6 11.500" /></svg>
            </div>
            <div class="fsearch"><svg width="16" height="16" viewBox="0 0 16 16" fill="none" stroke="#605e5c" stroke-width="1.200"><circle cx="10" cy="6" r="4.700" /><path d="M6.500 9.500L1 15" /></svg><span v-fit="37">Search</span></div>
            <hr>
            <div class="frow"><span v-fit="94">Filters on this page</span><em>...</em></div>
            <div class="drop"><span v-fit="100">Add data fields here</span></div>
            <div class="frow second"><span v-fit="92">Filters on all pages</span><em>...</em></div>
            <div class="drop"><span v-fit="100">Add data fields here</span></div>
          </aside>
        </div>

        <footer class="pages">
          <div class="view on"><svg width="20" height="16" viewBox="0 0 20 16" fill="none" stroke="#484644" stroke-width="1.300"><path d="M1.500 2h17v10h-17zM10 12v2.500M6 14.500h8" /></svg></div>
          <div class="view phone"><svg width="14" height="20" viewBox="0 0 14 20" fill="none" stroke="#484644" stroke-width="1.400"><rect x="1.500" y="1" width="11" height="18" rx="1" /><path d="M6 16h2" /></svg></div>
          <svg class="arrows" width="26" height="8" viewBox="0 0 26 8" fill="#c8c6c4"><path d="M5 0v8L1 4zM21 0v8l4-4z" /></svg>
          <div class="tab"><span v-fit="33">Page 1</span></div>
          <div class="tab"><span v-fit="33">Page 2</span></div>
          <div class="tab cur"><span v-fit="34">Page 3</span></div>
          <div class="plus"><svg width="11" height="11" viewBox="0 0 11 11" stroke="#fff" stroke-width="2.500"><path d="M5.500 .5v10M.5 5.500h10" /></svg></div>
        </footer>
      </div>

      <aside class="viz">
        <div class="phead"><b v-fit="92">Visualizations</b><svg width="13" height="12" viewBox="0 0 13 12" fill="none" stroke="#484644" stroke-width="1.300"><path d="M1 .5L6.500 6 1 11.500M6 .5L11.500 6 6 11.500" /></svg></div>
        <div class="build"><span v-fit="58">Build visual</span></div>
        <div class="modes">
          <div class="mode on"><svg width="24" height="24" viewBox="0 0 24 24"><path d="M1 1.500h18" stroke="#252423" /><path d="M1.500 5.500h21v7h-21zM1.500 15.500h21v7h-21z" fill="#117865" stroke="#252423" stroke-dasharray="1.500 1.500" /></svg></div>
          <div class="mode"><svg width="24" height="24" viewBox="0 0 24 24" fill="none" stroke="#484644" stroke-width="1.200"><path d="M10 22H2V1h9l6 6v3M11 1v6h6M23 8q-5 3-8 9l2 2q4-4 6-11zM15 17q-4 0-4 3-1 2-3 2 8 2 9-3z" /></svg></div>
        </div>
        <svg class="notch" width="169" height="9" viewBox="0 0 169 9" fill="none" stroke="#b3b0ad"><path d="M0 8.500h14l9-7.500 9 7.500h137" /></svg>
        <div class="grid"><svg v-for="(ic, n) in vizIcons" :key="n" width="18" height="18" viewBox="0 0 18 18" v-html="ic"></svg></div>
        <div class="more"><i></i><i></i><i></i></div>
        <div class="values">
          <div class="vl"><span v-fit="32">Values</span></div>
          <div class="well"><span v-fit="100">Add data fields here</span></div>
          <div class="vl drill"><span v-fit="65">Drill through</span></div>
          <div class="vl tg"><span v-fit="62">Cross-report</span><div class="toggle"><i></i>Off</div></div>
          <div class="vl tg two"><span v-fit="69">Keep all filters</span><div class="toggle ton">On<i></i></div></div>
          <div class="well last"><span v-fit="141">Add drill-through fields here</span></div>
        </div>
      </aside>

      <aside class="data">
        <div class="phead"><b v-fit="31">Data</b><svg width="13" height="12" viewBox="0 0 13 12" fill="none" stroke="#484644" stroke-width="1.300"><path d="M1 .5L6.500 6 1 11.500M6 .5L11.500 6 6 11.500" /></svg></div>
        <div class="dsearch"><svg width="14" height="14" viewBox="0 0 14 14" fill="none" stroke="#605e5c" stroke-width="1.200"><circle cx="6" cy="6" r="4.500" /><path d="M9.500 9.500L13 13" /></svg><span v-fit="39">Search</span></div>
        <div class="tree">
          <div class="list">
            <div class="troot"><svg width="28" height="12" viewBox="0 0 28 12" fill="none" stroke="#252423"><path d="M1 3.500l5 5 5-5M16.500 1.500h10v9h-10zM16.500 4.500h10M16.500 7.500h10M20 1.500v9M23.500 1.500v9" /></svg><span v-fit="108">world food producti...</span></div>
            <div v-for="fd in fields" :key="fd[0]" class="field"><i class="box"></i><svg width="12" height="12" viewBox="0 0 12 12" fill="none" stroke="#252423" stroke-width="1.100"><path v-if="fd[0] !== 'Entity'" d="M10.500 3V1.500H2L6.500 6 2 10.500h8.500V9" /></svg><span v-fit="fd[1]">{{ fd[0] }}</span></div>
          </div>
          <div class="scroll"></div>
        </div>
      </aside>
    </main>

    <footer class="status">
      <span v-fit="56">Page 3 of 3</span>
      <div class="zoom">
        <svg width="116" height="14" viewBox="0 0 116 14" stroke="#605e5c"><path d="M1 7.500h4" stroke-width="2" /><path d="M8 7.500h94" /><path d="M34.500 1v12" stroke-width="4" /><path d="M55.500 4v6M107 7.500h7M110.500 4v7" stroke-width="1.300" /></svg>
        <span v-fit="21">60%</span>
        <svg width="15" height="13" viewBox="0 0 15 13" fill="none" stroke="#484644"><path d="M.5.500h14v12H.5zM3 5V3h2.500M9.500 3H12v2M12 8v2H9.500M5.500 10H3V8" /></svg>
      </div>
    </footer>

    <footer class="taskbar">
      <div class="start"><svg width="15" height="16" viewBox="0 0 15 16" fill="#fff"><path d="M0 2.500L6.500 1.500V7.500H0zM7.300 1.400L15 0V7.500H7.300zM0 8.300H6.500V14.500L0 13.500zM7.300 8.300H15V16L7.300 14.700z" /></svg></div>
      <div class="tsearch">
        <svg width="17" height="18" viewBox="0 0 17 18" fill="none" stroke="#252423" stroke-width="1.300"><circle cx="10.500" cy="6.500" r="5" /><path d="M7 10.500L1 16.500" /></svg>
        <span v-fit="120">Type here to search</span>
        <svg class="pipes" width="64" height="38" viewBox="0 0 64 38" fill="none"><path d="M4.500 15V6l6-1.500V13" stroke="#54505e" stroke-width="1.500" /><ellipse cx="3" cy="15" rx="2" ry="1.500" fill="#54505e" /><ellipse cx="9" cy="13.500" rx="2" ry="1.500" fill="#54505e" /><path d="M25 2l1 22M31 5l-1 19M39 5l-4 19" stroke="#cc922f" stroke-width="2.200" /><path d="M27 5q10-6 18 0 8 6 7 14l-3 6" stroke="#b0705c" stroke-width="1.100" /><path d="M8 20q4-2 8 4 4 2 8-1 5-4 12-1 7 3 4 8-3 7-12 6-9-1-14-10-3-3-6-6z" fill="#b4472b" stroke="#853420" stroke-width=".8" /><path d="M9 22L3 36M48 23l-3 9q2 3 4 0" stroke="#d5a440" stroke-width="2.200" /><path d="M20 25q6 5 17 3M26 34q5-3 7-10" stroke="#e9a07c" /><path d="M57 31V21l4 5" stroke="#54505e" stroke-width="1.500" /><circle cx="55.500" cy="31" r="2" fill="#54505e" /></svg>
      </div>
      <div v-for="(t, n) in tasks" :key="n" class="task" :class="{ run: t.u, act: t.act }" :style="{ width: t.w + 'px' }"><svg width="27" height="27" viewBox="0 0 28 28" v-html="t.i"></svg></div>
      <div class="tray">
        <svg width="22" height="26" viewBox="0 0 22 26"><defs><linearGradient id="sun" x1="0" y1="0" x2="1" y2="1"><stop offset="0" stop-color="#ffb02e" /><stop offset="1" stop-color="#ee6b17" /></linearGradient></defs><circle cx="10" cy="14" r="9.500" fill="url(#sun)" /><circle cx="15" cy="7" r="6" fill="#c42b2b" /><text x="15" y="10" text-anchor="middle" font-size="8" font-family="Open Sans, sans-serif" fill="#fff">1</text></svg>
        <span v-fit="28" class="temp">31°C</span>
        <svg class="sys" width="84" height="18" viewBox="0 0 84 18" fill="none" stroke="#f3f3f3" stroke-width="1.100"><path d="M1 12l5-6 5 6" /><path d="M24.500 6.500h7v6h-7zM31.500 8.500l3-1v4l-3-1M25 3.500q3.500-2 7 0M25 15.500q3.500 2 7 0" /><circle cx="28" cy="9.500" r="1" /><path d="M49 5.500h10.500v7H48M54 13v3M51 15.500h7M45.500 3.500h4v4h-4zM47.500 7.500v8" /><path d="M67 7h3l4-4v12l-4-4h-3zM76 6q2 3 0 6M78.500 4.500q3 4.500 0 9M81 3q3 6 0 12" /></svg>
        <span v-fit="22" class="eng">ENG</span>
        <div class="clock"><span v-fit="25">15:49</span><span v-fit="54">10-03-2025</span></div>
        <svg class="note" width="30" height="30" viewBox="0 0 30 30"><path d="M2 3h15v13H9l-4 4v-4H2z" fill="#fff" /><path d="M5 6.500h9M5 9.500h9M5 12.500h6" stroke="#222" /><circle cx="15.500" cy="20" r="8.500" fill="#3a3a3a" stroke="#aaa" /><text x="15.500" y="23.800" text-anchor="middle" font-size="10.500" font-weight="600" font-family="Open Sans, sans-serif" fill="#fff">22</text></svg>
      </div>
    </footer>
  </div>
</template>

<style>
html, body { margin: 0; overflow: hidden; }
</style>
<style scoped>
* { box-sizing: border-box; }
svg { display: block; flex: none; }
span, b, small { white-space: nowrap; }
.app { width: 1280px; height: 719px; display: flex; flex-direction: column; overflow: hidden; font-family: "Open Sans", "Noto Sans", sans-serif; font-size: 11.5px; line-height: 15px; color: #323130; background: #fff; }
.titlebar { height: 32px; flex: none; background: #3b3a39; color: #fff; display: flex; align-items: center; position: relative; }
.quick { width: 551px; padding-left: 14px; display: flex; align-items: center; }
.doc { margin: 4px 6px 0 1px; font-size: 11px; width: 259px; }
.topsearch { width: 375px; height: 22px; background: #d2d1d0; border-radius: 2px; display: flex; align-items: center; padding-left: 16px; gap: 9px; color: #2b5b50; font-size: 12px; }
.sign { margin-left: 154px; display: flex; align-items: center; gap: 9px; font-size: 11px; }
.winbtns { margin-left: 27px; }
.peek { position: absolute; left: 528px; top: 0; width: 225px; height: 1px; background: linear-gradient(90deg, #1f6fb0 44px, #eee 44px); }
.menu { height: 32px; flex: none; background: #fafafa; display: flex; position: relative; font-size: 12.6px; }
.menu a { display: flex; justify-content: center; align-items: center; height: 30px; position: relative; }
.menu a.on { font-weight: 600; color: #252423; }
.menu a.on::after { content: ""; position: absolute; left: 14px; right: 14px; bottom: 1px; height: 3px; background: #117865; }
.share { margin-left: auto; margin-right: 6px; margin-top: 4px; width: 78px; height: 22px; border: 0; border-radius: 4px; background: #117865; color: #fff; display: flex; align-items: center; padding: 0 0 0 6px; font: 600 11px "Open Sans", sans-serif; gap: 7px; }
.share svg:last-child { margin-left: -3px; }
.ribbon { height: 86px; flex: none; background: #fafafa; display: flex; position: relative; border-bottom: 1px solid #dcdad8; }
.group { height: 84px; margin-top: 1px; border-right: 1px solid #d6d4d2; display: flex; flex-direction: column; align-items: center; justify-content: space-between; }
.group small { font-size: 8.8px; line-height: 12px; }
.items { display: flex; align-self: flex-start; }
.item { display: flex; flex-direction: column; align-items: center; padding-top: 5px; font-size: 11px; }
.ln { height: 15px; display: flex; align-items: center; white-space: nowrap; line-height: 15px; gap: 2px; }
.item > svg { margin-bottom: .5px; }
.off { color: #bebbb8; }
.collapse { position: absolute; right: 4px; bottom: 6px; transform: scale(.8); }
.clip { width: 151px; }
.clipbody { display: flex; align-self: flex-start; color: #bebbb8; font-size: 11px; padding-left: 13px; }
.paste { width: 28px; padding-top: 5px; display: flex; flex-direction: column; align-items: center; gap: .5px; }
.cliplist { padding: 1px 0 0 8px; }
.cliplist div { height: 22.5px; display: flex; align-items: center; gap: 3px; line-height: 22px; }
.main { height: 508px; flex: none; display: flex; }
.left { width: 941px; display: grid; grid-template-columns: 38px 1fr; grid-template-rows: 476px 32px; }
.rail { grid-row: span 2; background: #f3f2f1; border-right: 1px solid #e1dfdd; }
.rail div { height: 37.5px; display: flex; align-items: center; justify-content: center; }
.rail .cur { border-left: 3px solid #117865; padding-right: 3px; }
.work { display: flex; background: #fff; }
.report { overflow: hidden; }
.report text { white-space: pre; }
.din text { font-family: "Roboto", sans-serif; font-weight: 500; font-size: 8.8px; fill: #252423; }
.lbl text { font-family: "Open Sans", sans-serif; }
.axis text { font: 600 6px "Open Sans", sans-serif; fill: #484644; }
.big { font: 400 28.5px "Roboto", sans-serif; fill: #252423; }
.sub { font-size: 8.7px; fill: #484644; }
.gauge { font-size: 20px; font-weight: 300; fill: #605e5c; }
.inbar text { font-size: 7.5px; font-weight: 600; fill: #fff; }
.filters { width: 181px; border-left: 1px solid #b3b0ad; }
.fhead { display: flex; align-items: center; height: 36px; padding-left: 10px; }
.fhead b { font-size: 13.500px; margin-left: 7px; width: 41px; font-weight: 600; }
.eye { margin: 0 14px 0 56px; }
.fsearch { width: 162px; height: 29px; margin: 6px 0 4px 7px; border: 1px solid #b3b0ad; border-radius: 2px; display: flex; align-items: center; padding-left: 10px; gap: 11px; }
.filters hr { margin: 0; border: 0; border-top: 1px solid #b3b0ad; }
.frow { display: flex; justify-content: space-between; align-items: center; height: 38px; padding: 7px 10px 0 7px; font-size: 11px; }
.frow em { font-style: normal; letter-spacing: 1.3px; }
.frow.second { height: 48px; padding-top: 17px; }
.drop { width: 165px; height: 43px; margin-left: 7px; border: 1px solid #c8c6c4; border-radius: 2px; display: flex; align-items: center; justify-content: center; }
.pages { background: #f3f2f1; border-bottom: 1px solid #d6d4d2; display: flex; align-items: stretch; }
.view { width: 22px; margin-left: 10px; display: flex; align-items: center; justify-content: center; padding-bottom: 5px; }
.view.on { border-bottom: 3px solid #117865; margin-bottom: 2px; padding-bottom: 0; }
.phone { margin-left: 19px; }
.arrows { align-self: center; margin: 0 6px 0 15px; }
.tab { width: 71.7px; background: #fff; border-left: 1px solid #c8c6c4; display: flex; align-items: center; justify-content: center; padding-top: 2px; font-size: 11px; }
.tab.cur { border-bottom: 3px solid #117865; font-weight: 600; padding-top: 5px; width: 73px; }
.plus { width: 37px; background: #117865; display: flex; align-items: center; justify-content: center; }
.viz { width: 170px; background: #f3f2f1; border-left: 1px solid #d6d4d2; border-right: 1px solid #e1dfdd; }
.phead { height: 36px; display: flex; align-items: center; justify-content: space-between; padding: 0 6px 0 7px; font-size: 13.500px; }
.phead b { font-weight: 600; }
.build { padding-left: 7px; height: 14px; line-height: 14px; font-weight: 600; font-size: 11px; }
.modes { display: flex; padding: 3px 0 0 7px; gap: 31px; height: 37px; }
.mode { width: 30px; height: 30px; display: flex; align-items: center; justify-content: center; }
.mode.on { background: #d2d0ce; border-radius: 2px; }
.notch { margin-left: -1px; }
.grid { display: grid; grid-template-columns: repeat(6, 26.2px); grid-auto-rows: 26.2px; padding: 5px 0 0 5px; place-items: center; }
.grid svg { overflow: visible; }
.more { display: flex; gap: 4px; padding: 10px 0 0 12px; height: 30px; border-bottom: 1px solid #e1dfdd; margin-top: 2px; }
.more i { width: 2px; height: 2px; background: #484644; }
.values { padding-left: 4px; font-size: 11px; }
.vl { padding-left: 7px; height: 28px; display: flex; align-items: center; padding-top: 1px; }
.well { width: 159px; height: 27px; background: #fff; border: 1px dashed #c8c6c4; display: flex; align-items: center; padding: 0 0 1px 9px; font-size: 11.300px; }
.drill { font-weight: 600; height: 30px; padding-top: 3px; color: #484644; }
.tg { height: 20px; padding-top: 0; justify-content: space-between; padding-right: 20px; margin-top: -1px; }
.two { margin-top: 5px; }
.toggle { width: 30px; height: 15px; border: 1px solid #605e5c; border-radius: 8px; background: #fff; display: flex; align-items: center; justify-content: center; gap: 2px; font-size: 9px; line-height: 12px; color: #484644; }
.toggle i { width: 8px; height: 8px; border-radius: 4px; background: #484644; }
.ton { background: #117865; border-color: #117865; color: #fff; }
.ton i { background: #fff; }
.last { margin-top: 8px; padding-left: 7px; height: 25px; font-size: 11.500px; }
.data { width: 169px; background: #f3f2f1; }
.data .phead { padding-left: 8px; padding-right: 6px; }
.dsearch { margin: 6px 0 9px 4px; width: 161px; height: 23px; background: #fff; border: 1px solid #d2d0ce; border-radius: 4px; display: flex; align-items: center; padding-left: 11px; gap: 6px; color: #605e5c; font-size: 12px; }
.tree { display: flex; }
.list { width: 158px; }
.troot { height: 21px; display: flex; align-items: center; padding-left: 12px; gap: 4px; }
.field { height: 22.470px; display: flex; align-items: center; padding: 1px 0 0 41px; gap: 7px; font-size: 11.300px; }
.field svg { margin-right: -2px; }
.box { width: 12px; height: 12px; border: 1px solid #8a8886; border-radius: 2px; flex: none; }
.scroll { width: 7px; height: 326px; background: #8a8886; margin-top: -2px; }
.status { height: 23px; flex: none; background: #f3f2f1; border-bottom: 1px solid #8a8886; border-top: 1px solid #e1dfdd; display: flex; align-items: center; padding: 2px 16px 0 4px; justify-content: space-between; font-size: 11px; color: #484644; }
.zoom { display: flex; align-items: center; gap: 11px; }
.zoom svg:first-child { margin-right: 1px; }
.zoom svg:last-child { margin-left: 8px; }
.taskbar { height: 38px; flex: none; background: #1d1d1d; display: flex; color: #fff; }
.start { width: 45px; display: flex; align-items: center; justify-content: center; }
.tsearch { width: 322px; background: #f2f2f2; border: 1px solid #d0d0d0; display: flex; align-items: center; padding-left: 10px; gap: 9px; color: #333; font-size: 13.300px; }
.pipes { margin: 0 2px 0 auto; }
.task { display: flex; align-items: center; justify-content: center; position: relative; }
.task.run::after { content: ""; position: absolute; left: 4px; right: 4px; bottom: 0; height: 2px; background: #76b9ed; }
.task.act { background: #4d4d4d; }
.task.act::after { left: 0; right: 0; }
.tray { display: flex; align-items: center; flex: 1; padding-left: 26px; }
.temp { margin-left: 6px; font-size: 13px; width: 28px; }
.sys { margin-left: 16px; }
.eng { margin-left: 6px; font-size: 11px; width: 22px; }
.clock { width: 60px; margin-left: 9px; display: flex; flex-direction: column; align-items: center; font-size: 11px; line-height: 17px; }
.note { margin-left: 12px; }
</style>
